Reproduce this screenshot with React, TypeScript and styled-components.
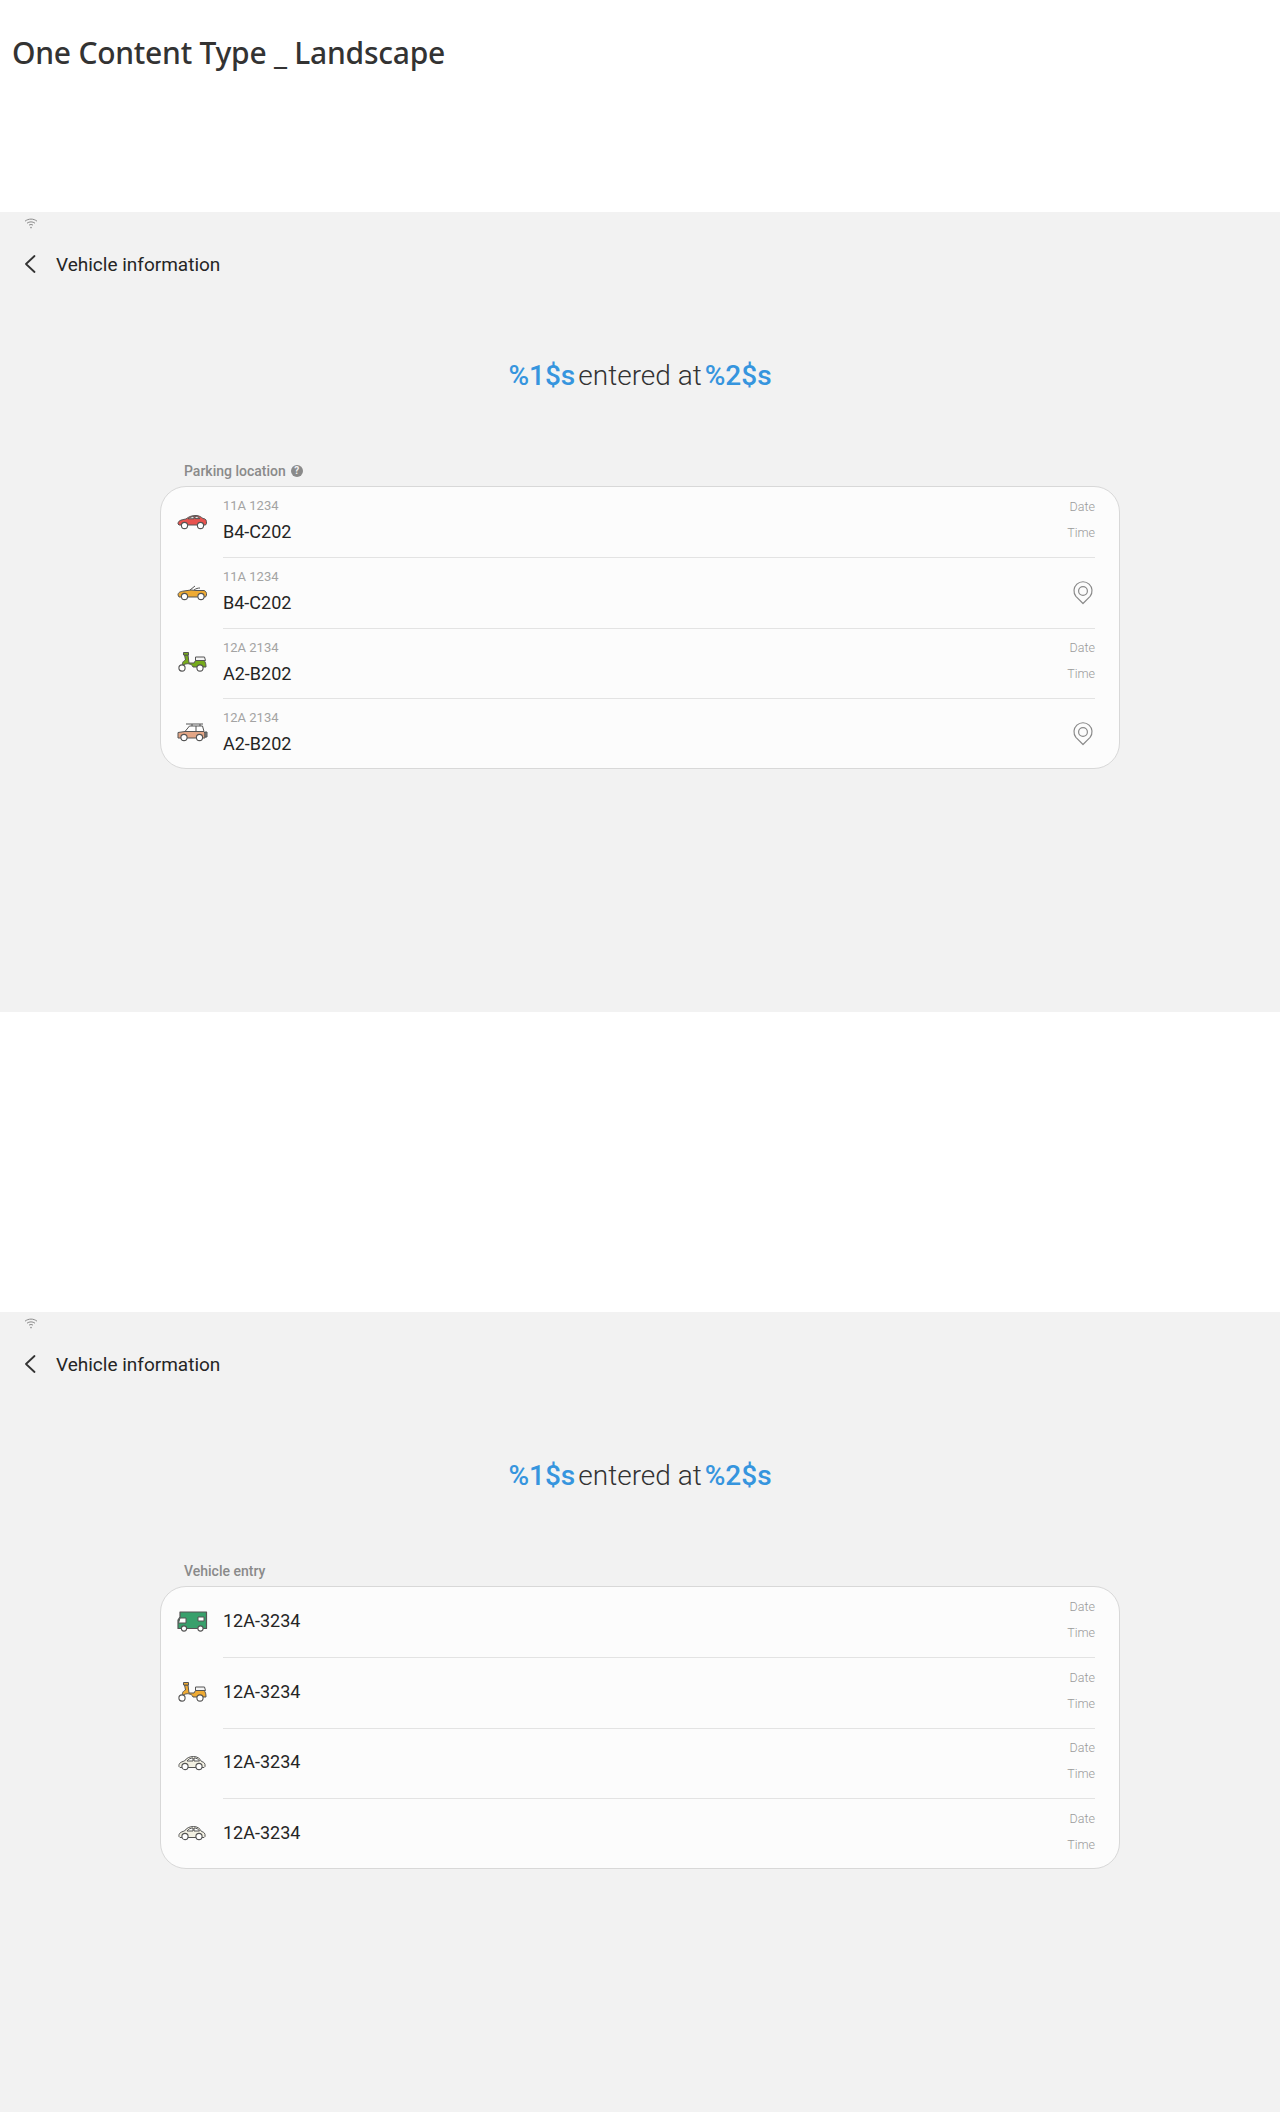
import React from 'react';
import styled, { createGlobalStyle } from 'styled-components';

const GlobalStyle = createGlobalStyle`
  html, body {
    margin: 0;
    padding: 0;
    background: #ffffff;
    font-family: Roboto, 'Liberation Sans', sans-serif;
  }
`;

const Page = styled.div`
  width: 1280px;
  height: 2112px;
  display: flex;
  flex-direction: column;
  overflow: hidden;
`;

const PageHeader = styled.header`
  height: 212px;
  padding: 31px 0 0 12px;
  box-sizing: border-box;
`;

const PageTitle = styled.h1`
  margin: 0;
  font-family: 'Noto Sans', sans-serif;
  font-size: 30px;
  line-height: 44px;
  font-weight: 500;
  letter-spacing: -0.24px;
  color: #333333;
`;

const Spacer = styled.div`
  height: 300px;
`;

const Screen = styled.section`
  flex: 0 0 auto;
  height: 800px;
  background: #f2f2f2;
  display: flex;
  flex-direction: column;
`;

const StatusBar = styled.div`
  height: 23px;
  padding: 6px 0 0 24px;
  box-sizing: border-box;
  display: flex;
  align-items: flex-start;
`;

const AppBar = styled.div`
  height: 58px;
  padding-left: 24px;
  display: flex;
  align-items: center;
  gap: 20px;
`;

const AppBarTitle = styled.span`
  font-size: 19px;
  color: #252525;
`;

const Headline = styled.div`
  margin-top: 62px;
  height: 40px;
  display: flex;
  justify-content: center;
  align-items: center;
  gap: 3px;
  font-size: 28px;
  font-weight: 300;
  color: #333333;
`;

const Accent = styled.span`
  font-weight: 500;
  color: #3695de;
`;

const SectionLabel = styled.div`
  margin: 64px 0 0 184px;
  height: 27px;
  padding-bottom: 3px;
  box-sizing: border-box;
  display: flex;
  align-items: center;
  gap: 5px;
  font-size: 14px;
  font-weight: 500;
  color: #8a8a8a;
`;

const HelpDot = styled.span`
  width: 12px;
  height: 12px;
  border-radius: 50%;
  background: #8a8a8a;
  color: #f2f2f2;
  font-size: 10px;
  font-weight: 700;
  line-height: 12px;
  text-align: center;
`;

const Card = styled.div`
  margin: 0 160px;
  border: 1px solid #d8d8d8;
  border-radius: 26px;
  background: #fcfcfc;
  overflow: hidden;
`;

const Row = styled.div`
  height: 70.75px;
  box-sizing: border-box;
  display: flex;
  align-items: stretch;

  &:last-child {
    height: 69px;
  }
`;

const IconSlot = styled.div`
  flex: 0 0 62px;
  display: flex;
  justify-content: center;
  align-items: center;
  padding-bottom: 3px;
  box-sizing: border-box;
`;

const RowBody = styled.div<{ $divider: boolean }>`
  flex: 1;
  margin-right: 24px;
  display: flex;
  justify-content: space-between;
  align-items: center;
  border-bottom: ${(p) => (p.$divider ? '1px solid #e3e3e3' : '0')};
`;

const Texts = styled.div`
  display: flex;
  flex-direction: column;
  padding-bottom: 2px;
`;

const Plate = styled.span`
  margin-bottom: 5px;
  font-size: 13px;
  line-height: 18px;
  color: #a3a3a3;
`;

const Place = styled.span`
  font-size: 18px;
  line-height: 24px;
  color: #252525;
`;

const Stamps = styled.div`
  display: flex;
  flex-direction: column;
  align-items: flex-end;
  gap: 8px;
  padding-bottom: 4px;
  font-size: 12.5px;
  line-height: 18px;
  font-weight: 300;
  color: #9a9a9a;
`;

const PinSlot = styled.div`
  display: flex;
  padding-right: 2px;
`;

const Wifi = () => (
  <svg width="14" height="11" viewBox="0 0 14 11" fill="none" stroke="#8c8c8c" strokeWidth="1">
    <path d="M1 3.2C4.4.4 9.6.4 13 3.2" />
    <path d="M3 5.2c2.3-1.8 5.7-1.8 8 0" />
    <path d="M5 7.2c1.2-.9 2.8-.9 4 0" />
    <circle cx="7" cy="9.6" r=".8" fill="#8c8c8c" stroke="none" />
  </svg>
);

const Back = () => (
  <svg width="12" height="18" viewBox="0 0 12 18" fill="none" stroke="#333" strokeWidth="1.8" strokeLinecap="round" strokeLinejoin="round">
    <path d="M10.5 1 2 9l8.500 8" />
  </svg>
);

const Pin = () => (
  <svg width="20" height="24" viewBox="0 0 20 24" fill="none" stroke="#8a8a8a" strokeWidth="1.2">
    <path d="M10 22.500 2.900 15.300A9 9 0 1 1 17.100 15.300Z" strokeLinejoin="round" />
    <circle cx="10" cy="10" r="4.400" />
  </svg>
);

const Wheels = ({ a, b, y, r = 3.1 }: { a: number; b: number; y: number; r?: number }) => (
  <>
    <circle cx={a} cy={y} r={r} fill="#fff" stroke="#555" strokeWidth="1.1" />
    <circle cx={b} cy={y} r={r} fill="#fff" stroke="#555" strokeWidth="1.1" />
  </>
);

type VehicleKind = 'coupe' | 'roadster' | 'scooterGreen' | 'scooterOrange' | 'suv' | 'camper' | 'compact';

const Vehicle = ({ kind }: { kind: VehicleKind }) => {
  const line = { stroke: '#555', strokeWidth: 1, strokeLinejoin: 'round' as const };
  let art: React.ReactNode = null;
  if (kind === 'coupe') {
    art = (
      <>
        <path d="M1 15c0-3 2-4 8-5 3-2.500 6-3.500 10-3.500 3 0 5 1.500 7 3 3 .3 3.500 1.500 3.500 5l-1 1.500H2Z" fill="#e8534f" {...line} />
        <path d="M11 9.800c2-1.500 4-2.400 6-2.500v2.500Zm7-2.500c2 0 3.800.8 5 2.300h-5Z" fill="#e8e8e8" {...line} />
        <Wheels a={7.500} b={23.500} y={16.500} />
      </>
    );
  } else if (kind === 'roadster') {
    art = (
      <>
        <path d="M1 15c0-2.500 2-3.500 6-4l7-1 5 .5h8c2 .8 2.800 2.300 2.500 4.500l-1 2H2Z" fill="#eeaa33" {...line} />
        <path d="M13 10l5-4M17 10c2-1.500 4-2 6-2" fill="none" {...line} />
        <Wheels a={7.500} b={24} y={16.500} />
      </>
    );
  } else if (kind === 'scooterGreen' || kind === 'scooterOrange') {
    const fill = kind === 'scooterGreen' ? '#76ab1b' : '#eeaa33';
    art = (
      <>
        <path d="M7.500 5h3.500l1 8h5l1.500-2.500h8.500c1.500 1.500 2 3.500 2 6.500H16c-1-3.500-7-4.500-10-1.500-1.500-2 0-4.500 2.500-5.500Z" fill={fill} {...line} />
        <path d="M18.500 7h9l1 3.500h-10Z" fill="#f4f4f4" {...line} />
        <path d="M6.500 2.500h5V5h-5Z" fill={fill} {...line} />
        <Wheels a={5} b={23} y={18} />
      </>
    );
  } else if (kind === 'suv') {
    art = (
      <>
        <path d="M9 4h17M15 4v2M23 4v2" fill="none" {...line} />
        <path d="M8 11.500 12.500 6H25.500l1.500 5.500Z" fill="#fff" {...line} />
        <path d="M19 6v5.500" fill="none" {...line} />
        <path d="M1 12.500 8 11.500h19l1 2v4.500H1Z" fill="#e3a686" {...line} />
        <path d="M28 12h2v5h-2Z" fill="#888" {...line} />
        <Wheels a={7} b={22.500} y={17.500} />
      </>
    );
  } else if (kind === 'camper') {
    art = (
      <>
        <path d="M3 3h26.500v16.500H1V11l2-3Z" fill="#38a06c" stroke="#555" strokeWidth="1.200" strokeLinejoin="round" />
        <path d="M3 9h6v5H1.500ZM21 8h6v4h-6Z" fill="#fff" {...line} />
        <Wheels a={7} b={23.500} y={19.500} r={2.600} />
      </>
    );
  } else {
    art = (
      <>
        <path d="M2 16.500c-.5-3 1.500-4.500 5.500-5.500 2-3 5-4.500 9-4.500 4 0 6.500 2 8 5 2.500.5 4 2 3.500 5l-1 1H3Z" fill="#f2f0e2" {...line} />
        <path d="M10 11c1.500-2 3.500-3 6-3v3Zm7-3c2.500 0 4.500 1 5.500 3H17Z" fill="#fff" {...line} />
        <Wheels a={8} b={22} y={16.500} />
      </>
    );
  }
  return (
    <svg width="31" height="24" viewBox="0 0 31 24" fill="none">
      {art}
    </svg>
  );
};

type ListItem = { kind: VehicleKind; plate?: string; main: string; trailing: 'stamps' | 'pin' };

const parkingItems: ListItem[] = [
  { kind: 'coupe', plate: '11A 1234', main: 'B4-C202', trailing: 'stamps' },
  { kind: 'roadster', plate: '11A 1234', main: 'B4-C202', trailing: 'pin' },
  { kind: 'scooterGreen', plate: '12A 2134', main: 'A2-B202', trailing: 'stamps' },
  { kind: 'suv', plate: '12A 2134', main: 'A2-B202', trailing: 'pin' },
];

const entryItems: ListItem[] = [
  { kind: 'camper', main: '12A-3234', trailing: 'stamps' },
  { kind: 'scooterOrange', main: '12A-3234', trailing: 'stamps' },
  { kind: 'compact', main: '12A-3234', trailing: 'stamps' },
  { kind: 'compact', main: '12A-3234', trailing: 'stamps' },
];

const VehicleScreen = ({ label, help, items }: { label: string; help?: boolean; items: ListItem[] }) => (
  <Screen>
    <StatusBar>
      <Wifi />
    </StatusBar>
    <AppBar>
      <Back />
      <AppBarTitle>Vehicle information</AppBarTitle>
    </AppBar>
    <Headline>
      <Accent>%1$s</Accent>
      <span>entered at</span>
      <Accent>%2$s</Accent>
    </Headline>
    <SectionLabel>
      {label}
      {help && <HelpDot>?</HelpDot>}
    </SectionLabel>
    <Card>
      {items.map((item, i) => (
        <Row key={i}>
          <IconSlot>
            <Vehicle kind={item.kind} />
          </IconSlot>
          <RowBody $divider={i < items.length - 1}>
            <Texts>
              {item.plate && <Plate>{item.plate}</Plate>}
              <Place>{item.main}</Place>
            </Texts>
            {item.trailing === 'pin' ? (
              <PinSlot>
                <Pin />
              </PinSlot>
            ) : (
              <Stamps>
                <span>Date</span>
                <span>Time</span>
              </Stamps>
            )}
          </RowBody>
        </Row>
      ))}
    </Card>
  </Screen>
);

export default function App() {
  return (
    <Page>
      <GlobalStyle />
      <PageHeader>
        <PageTitle>One Content Type _ Landscape</PageTitle>
      </PageHeader>
      <VehicleScreen label="Parking location" help items={parkingItems} />
      <Spacer />
      <VehicleScreen label="Vehicle entry" items={entryItems} />
    </Page>
  );
}
